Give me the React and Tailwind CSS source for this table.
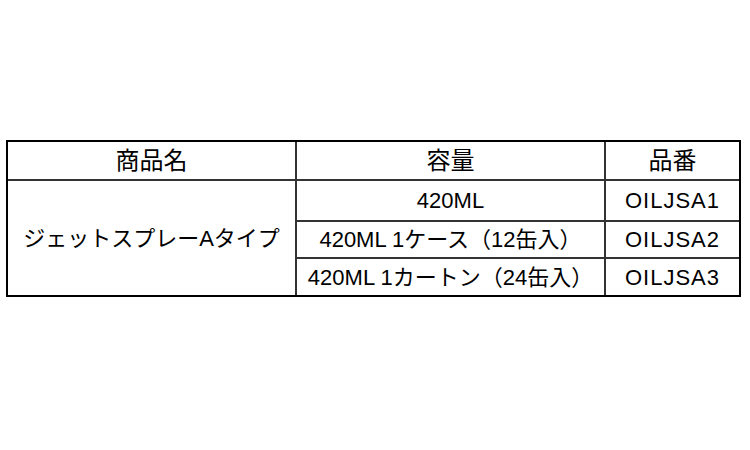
export default function App() {
    const rows = [
        { size: "420ML", code: "OILJSA1", h: "h-[39px]" },
        { size: "420ML 1ケース（12缶入）", code: "OILJSA2", h: "h-[37px]" },
        { size: "420ML 1カートン（24缶入）", code: "OILJSA3", h: "h-[38px]" },
    ];

    return (
        <div className="min-h-[450px] w-[750px] bg-white pt-[140px] pl-[6px] text-[22px] text-black font-['Liberation_Sans','Noto_Sans_CJK_JP',sans-serif]">
            <div className="w-[735px] border-2 border-black">
                {/* header */}
                <div className="grid h-[37px] grid-cols-[287px_309px_135px] items-center">
                    <div className="flex h-full items-center justify-center text-[24px]">商品名</div>
                    <div className="flex h-full items-center justify-center border-l-2 border-[#333] text-[24px]">容量</div>
                    <div className="flex h-full items-center justify-center border-l-2 border-[#333] text-[24px]">品番</div>
                </div>

                {/* body */}
                <div className="grid grid-cols-[287px_444px] border-t-2 border-[#333]">
                    <div className="flex items-center justify-center">ジェットスプレーAタイプ</div>
                    <div className="flex flex-col">
                        {rows.map((r, i) => (
                            <div
                                key={r.code}
                                className={`grid grid-cols-[309px_135px] ${r.h} ${i > 0 ? "border-t-2 border-[#333]" : ""}`}
                            >
                                <div className="flex items-center justify-center border-l-2 border-[#333] whitespace-pre">{r.size}</div>
                                <div className="flex items-center justify-center border-l-2 border-[#333] tracking-[1px]">{r.code}</div>
                            </div>
                        ))}
                    </div>
                </div>
            </div>
        </div>
    );
}
